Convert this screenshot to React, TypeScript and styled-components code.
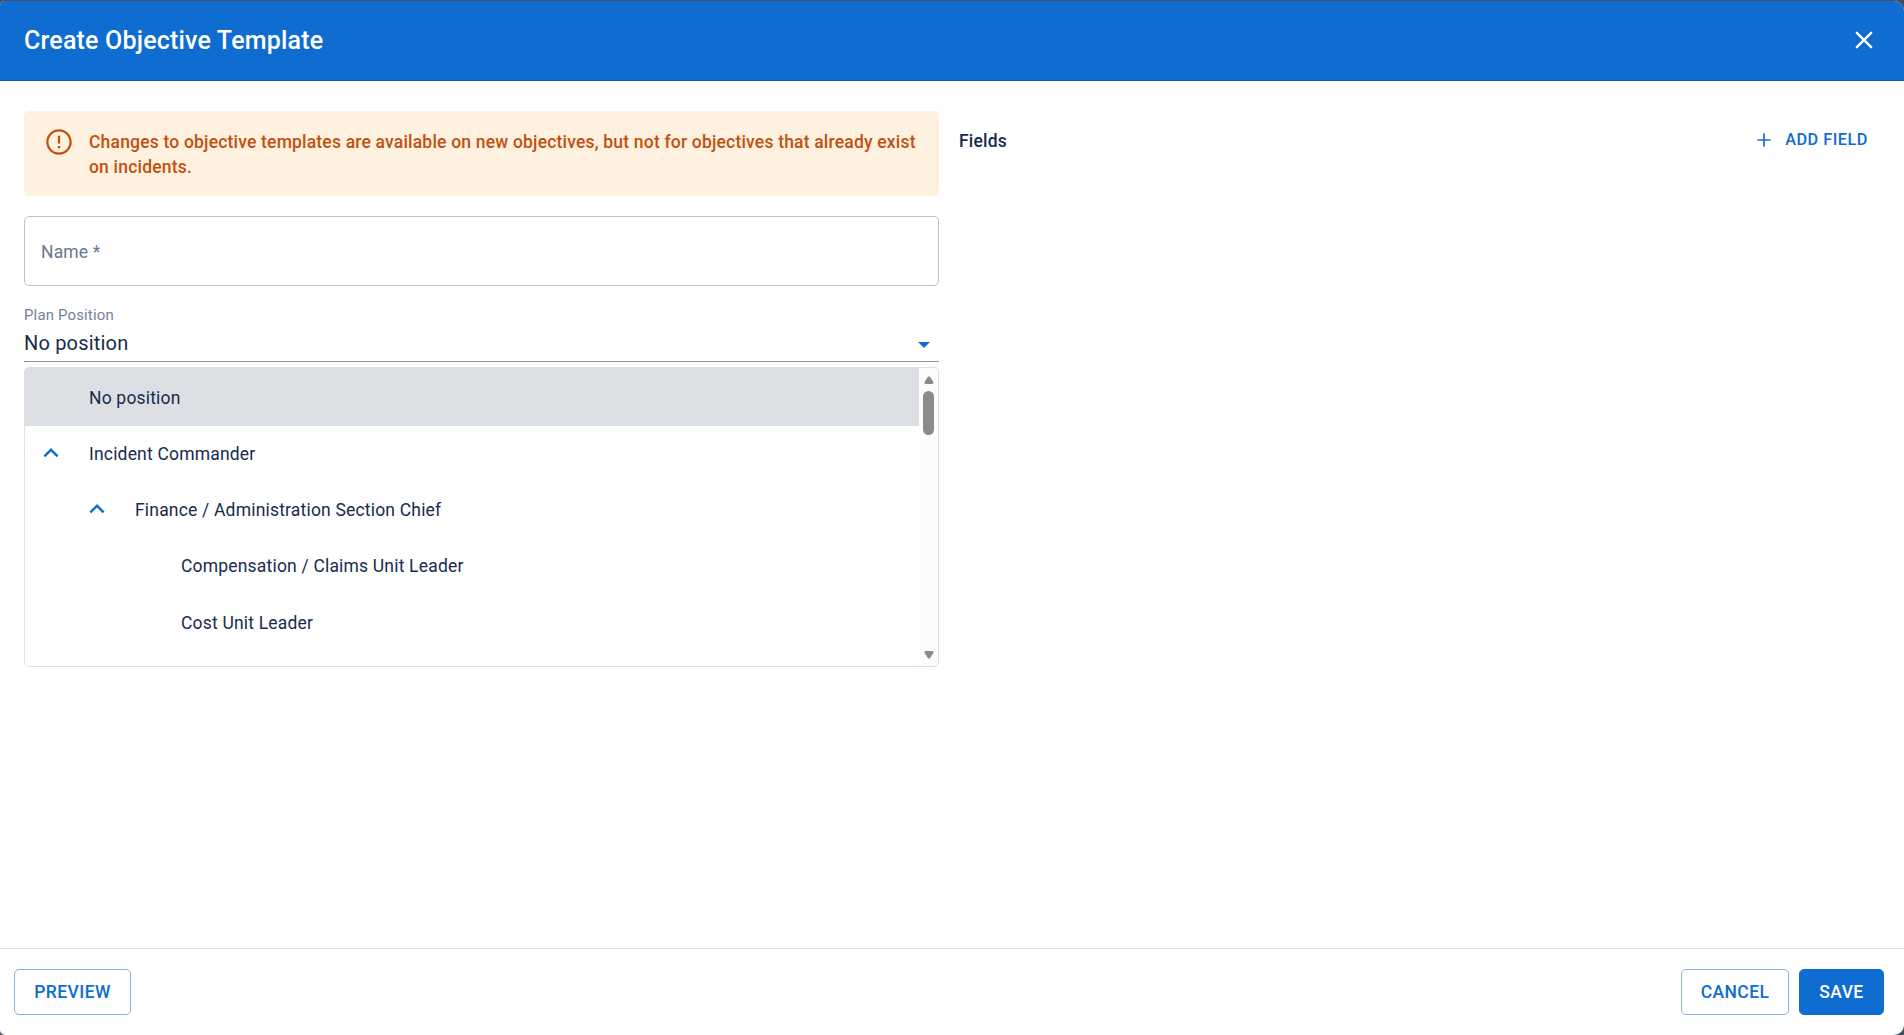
import React from "react";
import styled, { createGlobalStyle } from "styled-components";

const blue = "#0f6cd0";
const ink = "#172b4d";
const muted = "#6b7890";

const Global = createGlobalStyle`
  *, *::before, *::after { box-sizing: border-box; }
  body { margin: 0; background: #434f60; font-family: Roboto, sans-serif; color: ${ink}; overflow: hidden; }
  button { font-family: inherit; cursor: pointer; }
`;

const Backdrop = styled.div`
  height: 1035px;
  padding: 1px 0;
  background: #434f60;
`;

const Dialog = styled.section`
  display: flex;
  flex-direction: column;
  height: 1033.5px;
  border-radius: 5px 10px 10px 5px;
  overflow: hidden;
  background: #fff;
`;

const Header = styled.header`
  display: flex;
  align-items: center;
  justify-content: space-between;
  flex: none;
  height: 80px;
  padding: 0 28px 1px 24px;
  background: ${blue};
  border-bottom: 1px solid #0c5cb4;
  color: #fff;
`;

const Title = styled.h1`
  margin: 1px 0 0;
  font-size: 25px;
  font-weight: 500;
  line-height: 32px;
  letter-spacing: 0.0075em;
`;

const IconButton = styled.button`
  display: flex;
  padding: 0;
  border: 0;
  background: none;
  color: inherit;
`;

const Content = styled.main`
  display: grid;
  grid-template-columns: 915px 1fr;
  column-gap: 20px;
  flex: 1;
  padding: 30px 16px 0 24px;
`;

const FormColumn = styled.div`
  display: flex;
  flex-direction: column;
`;

const Banner = styled.div`
  display: flex;
  gap: 15px;
  height: 85px;
  padding: 16px 20px 0 20px;
  border-radius: 5px;
  background: #fff1df;
  color: #c1500f;

  svg {
    flex: none;
  }
`;

const BannerText = styled.p`
  margin: 3px 0 0;
  font-size: 17.5px;
  font-weight: 500;
  line-height: 25px;
  letter-spacing: 0.01071em;
`;

const NameField = styled.div`
  display: flex;
  align-items: center;
  height: 70px;
  margin-top: 20px;
  padding: 2px 16px 0;
  border: 1px solid #c1c1c1;
  border-radius: 5px;
  font-size: 17.5px;
  letter-spacing: 0.00938em;
  color: ${muted};
`;

const SelectField = styled.div`
  display: flex;
  flex-direction: column;
  height: 76px;
  padding-top: 19px;
  border-bottom: 1px solid #8f8f8f;
`;

const SelectLabel = styled.label`
  font-size: 15px;
  line-height: 20px;
  letter-spacing: 0.00938em;
  color: #75829a;
`;

const SelectValue = styled.div`
  display: flex;
  align-items: center;
  justify-content: space-between;
  height: 36px;
  padding-right: 9px;
  font-size: 20px;
  letter-spacing: 0.00938em;

  svg {
    margin-top: 4px;
  }
`;

const Listbox = styled.div`
  display: flex;
  height: 300px;
  margin-top: 5px;
  border: 1px solid #dcdfe3;
  border-radius: 5px;
  overflow: hidden;
`;

const Options = styled.div`
  flex: 1;
`;

const Option = styled.div<{ $level: number; $selected?: boolean }>`
  display: flex;
  align-items: center;
  height: ${(p) => (p.$selected ? 57.75 : 56.25)}px;
  padding-top: ${(p) => (p.$selected ? 1.5 : 0)}px;
  padding-left: ${(p) => 11 + p.$level * 46}px;
  background: ${(p) => (p.$selected ? "#dcdfe4" : "transparent")};
  font-size: 17.5px;
  letter-spacing: 0.01071em;
`;

const Toggle = styled.span`
  display: flex;
  align-items: center;
  flex: none;
  width: 53px;
  height: 30px;
  margin-bottom: 1.5px;
  color: ${blue};
`;

const Scrollbar = styled.div`
  display: flex;
  flex-direction: column;
  align-items: center;
  justify-content: space-between;
  width: 19px;
  padding: 7.5px 0 7px;
  background: #fcfcfc;
  color: #8b8b8b;
`;

const ThumbTrack = styled.div`
  flex: 1;
  padding-top: 7.5px;
`;

const Thumb = styled.div`
  width: 11px;
  height: 44px;
  border-radius: 6px;
  background: #8b8b8b;
`;

const FieldsHeader = styled.div`
  display: flex;
  align-items: center;
  justify-content: space-between;
  height: 60px;
  padding-right: 20px;
`;

const FieldsTitle = styled.h2`
  margin: 0;
  font-size: 17.5px;
  font-weight: 500;
  letter-spacing: 0.01071em;
`;

const AddField = styled(IconButton)`
  align-items: center;
  gap: 14px;
  margin-bottom: 2px;
  color: ${blue};
  font-size: 16.25px;
  font-weight: 500;
  letter-spacing: 0.52px;
`;

const AddLabel = styled.span`
  padding-bottom: 2px;
`;

const Footer = styled.footer`
  display: flex;
  align-items: flex-start;
  gap: 10px;
  flex: none;
  height: 86.5px;
  padding: 20px 20px 0 14px;
  border-top: 1px solid #dcdfe3;
`;

const Spacer = styled.div`
  flex: 1;
`;

const Button = styled.button<{ $width: number; $solid?: boolean }>`
  width: ${(p) => p.$width}px;
  height: 46px;
  padding: 0;
  border: 1px solid ${(p) => (p.$solid ? blue : "#87b5e7")};
  border-radius: 5px;
  background: ${(p) => (p.$solid ? blue : "#fff")};
  color: ${(p) => (p.$solid ? "#fff" : blue)};
  font-size: 17.5px;
  font-weight: 500;
  letter-spacing: 0.42px;
`;

const Chevron = () => (
  <svg width="30" height="30" viewBox="0 0 24 24" fill="currentColor">
    <path d="M7.41 15.41 12 10.83l4.59 4.58L18 14l-6-6-6 6z" />
  </svg>
);

const options = [
  { label: "No position", level: 0, selected: true, open: false },
  { label: "Incident Commander", level: 0, selected: false, open: true },
  { label: "Finance / Administration Section Chief", level: 1, selected: false, open: true },
  { label: "Compensation / Claims Unit Leader", level: 2, selected: false, open: false },
  { label: "Cost Unit Leader", level: 2, selected: false, open: false },
];

export default function App() {
  return (
    <>
      <Global />
      <Backdrop>
        <Dialog role="dialog">
          <Header>
            <Title>Create Objective Template</Title>
            <IconButton aria-label="Close">
              <svg width="24" height="24" viewBox="0 0 24 24" fill="none" stroke="currentColor" strokeWidth="2.4" strokeLinecap="round">
                <path d="M4.8 4.8 19.2 19.2M19.2 4.8 4.8 19.2" />
              </svg>
            </IconButton>
          </Header>
          <Content>
            <FormColumn>
              <Banner>
                <svg width="30" height="30" viewBox="0 0 24 24" fill="currentColor">
                  <path d="M11.1 15.2h1.8V17h-1.8zm0-8.2h1.8v6.2h-1.8zM12 1.8C6.4 1.8 1.8 6.4 1.8 12S6.4 22.2 12 22.2 22.2 17.6 22.2 12 17.6 1.8 12 1.8zm0 18.6c-4.64 0-8.4-3.76-8.4-8.4S7.36 3.6 12 3.6s8.4 3.76 8.4 8.4-3.76 8.4-8.4 8.4z" />
                </svg>
                <BannerText>
                  Changes to objective templates are available on new objectives, but not for objectives that already exist on incidents.
                </BannerText>
              </Banner>
              <NameField>Name *</NameField>
              <SelectField>
                <SelectLabel>Plan Position</SelectLabel>
                <SelectValue>
                  No position
                  <svg width="12" height="6" viewBox="0 0 12 6" fill={blue}>
                    <path d="M0 0h12L6 6z" />
                  </svg>
                </SelectValue>
              </SelectField>
              <Listbox role="listbox">
                <Options>
                  {options.map((o) => (
                    <Option key={o.label} $level={o.level} $selected={o.selected}>
                      <Toggle>{o.open && <Chevron />}</Toggle>
                      {o.label}
                    </Option>
                  ))}
                </Options>
                <Scrollbar>
                  <svg width="10" height="8" viewBox="0 0 10 8" fill="currentColor">
                    <path d="M4 .8Q5 0 6 .8L9.4 6Q9.8 8 8.5 8h-7Q.2 8 .6 6z" />
                  </svg>
                  <ThumbTrack>
                    <Thumb />
                  </ThumbTrack>
                  <svg width="10" height="8" viewBox="0 0 10 8" fill="currentColor">
                    <path d="M4 7.2Q5 8 6 7.2L9.4 2Q9.8 0 8.5 0h-7Q.2 0 .6 2z" />
                  </svg>
                </Scrollbar>
              </Listbox>
            </FormColumn>
            <FieldsHeader>
              <FieldsTitle>Fields</FieldsTitle>
              <AddField>
                <svg width="14" height="14" viewBox="0 0 14 14" stroke="currentColor" strokeWidth="1.7">
                  <path d="M7 .5v13M.5 7h13" />
                </svg>
                <AddLabel>ADD FIELD</AddLabel>
              </AddField>
            </FieldsHeader>
          </Content>
          <Footer>
            <Button $width={117}>PREVIEW</Button>
            <Spacer />
            <Button $width={108}>CANCEL</Button>
            <Button $width={85} $solid>SAVE</Button>
          </Footer>
        </Dialog>
      </Backdrop>
    </>
  );
}
